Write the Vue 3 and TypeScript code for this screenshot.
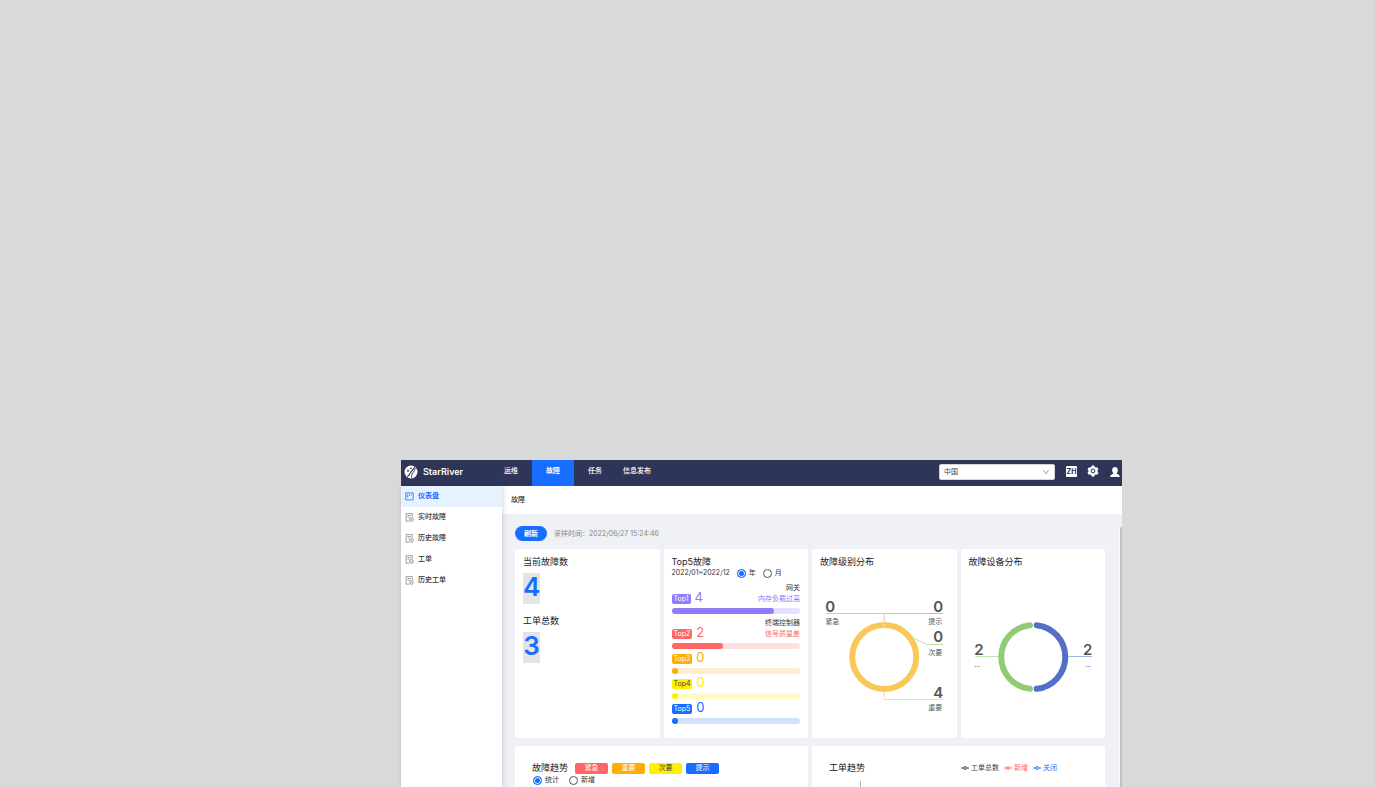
<script setup lang="ts">
import { ref } from 'vue'

interface TopItem {
  rank: number
  count: number
  percent: number
  tone: string
  device?: string
  fault?: string
}

const navItems = ['运维', '故障', '任务', '信息发布']
const sideItems = ['仪表盘', '实时故障', '历史故障', '工单', '历史工单']

const topItems: TopItem[] = [
  { rank: 1, count: 4, percent: 80, tone: 'purple', device: '网关', fault: '内存负载过高' },
  { rank: 2, count: 2, percent: 40, tone: 'red', device: '终端控制器', fault: '信号质量差' },
  { rank: 3, count: 0, percent: 0, tone: 'orange' },
  { rank: 4, count: 0, percent: 0, tone: 'yellow' },
  { rank: 5, count: 0, percent: 0, tone: 'blue' },
]

const levels = [
  { name: '紧急', tone: 'red' },
  { name: '重要', tone: 'orange' },
  { name: '次要', tone: 'yellow' },
  { name: '提示', tone: 'blue' },
]

const legend = [
  { name: '工单总数', tone: 'dark' },
  { name: '新增', tone: 'red' },
  { name: '关闭', tone: 'blue' },
]

const period = ref('year')
const trend = ref('total')
const region = ref('中国')
</script>

<template>
  <div class="page">
    <div class="app">
      <header class="topbar">
        <div class="brand">
          <svg class="logo" viewBox="0 0 14 14" aria-hidden="true">
            <circle cx="7" cy="7" r="6.5" fill="#fff" />
            <path d="M3.2 11.6 C5.6 10.8 5.4 8.4 7 6.8 C8.6 5.2 9.8 4 10.6 2.2" fill="none" stroke="#2f3459" stroke-width="1.1" />
            <path d="M7.6 12.8 C7.4 10.8 7.6 9.4 8.8 8 C10 6.6 10.8 5 11.4 3.4" fill="none" stroke="#2f3459" stroke-width="0.9" />
            <path d="M4 4.6 V7 M2.8 5.8 H5.2 M7 2.6 V4.2 M6.2 3.4 H7.8" stroke="#2f3459" stroke-width="0.8" />
          </svg>
          <span>StarRiver</span>
        </div>
        <nav class="nav">
          <a v-for="(n, i) in navItems" :key="n" href="#" :class="{ active: i === 1 }">{{ n }}</a>
        </nav>
        <div class="tools">
          <div class="select">
            <select v-model="region" aria-label="区域">
              <option>中国</option>
            </select>
            <svg viewBox="0 0 6 6" aria-hidden="true">
              <path d="M0.5 1.2 L3 4.8 L5.5 1.2" fill="none" stroke="#777" stroke-width="0.7" />
            </svg>
          </div>
          <button class="lang" type="button">ZH</button>
          <button class="icon gear" type="button" aria-label="设置">
            <svg viewBox="0 0 12 12">
              <path d="M4.7 0.6 H7.3 L7.7 2 L8.8 2.6 L10.2 2.2 L11.5 4.5 L10.5 5.5 V6.5 L11.5 7.5 L10.2 9.8 L8.8 9.4 L7.7 10 L7.3 11.4 H4.7 L4.3 10 L3.2 9.4 L1.8 9.8 L0.5 7.5 L1.5 6.5 V5.5 L0.5 4.5 L1.8 2.2 L3.2 2.6 L4.3 2 Z" fill="#fff" />
              <circle cx="6" cy="6" r="1.9" fill="#fff" stroke="#2f3459" stroke-width="1" />
            </svg>
          </button>
          <button class="icon user" type="button" aria-label="用户">
            <svg viewBox="0 0 12 12">
              <path d="M6 0.9 C8 0.9 8.9 2.3 8.9 4 C8.9 5.6 8.2 6.5 7.5 7.2 C7.4 8.1 10.6 8 10.9 10.9 H1.1 C1.4 8 4.6 8.1 4.5 7.2 C3.8 6.5 3.1 5.6 3.1 4 C3.1 2.3 4 0.9 6 0.9 Z" fill="#fff" />
            </svg>
          </button>
        </div>
      </header>

      <div class="body">
        <aside class="side">
          <a v-for="(s, i) in sideItems" :key="s" href="#" :class="{ active: i === 0 }">
            <svg v-if="i === 0" viewBox="0 0 9 9" aria-hidden="true">
              <path d="M0.8 0.9 H8.2 V7.9 H0.8 Z M2.7 2.4 V5.6 M4.6 2.4 V4 M6.4 2.4 V3.4" fill="none" stroke="currentColor" stroke-width="0.8" />
            </svg>
            <svg v-else viewBox="0 0 9 9" aria-hidden="true">
              <path d="M4 8.2 H1.1 V0.6 H7.3 V4 M2.5 2.5 H5.9 M2.5 4.2 H4.6" fill="none" stroke="currentColor" stroke-width="0.7" />
              <circle cx="6.4" cy="6.4" r="1.9" fill="none" stroke="currentColor" stroke-width="0.7" />
              <path d="M5.6 6.3 L6.3 7 L7.3 5.8" fill="none" stroke="currentColor" stroke-width="0.6" />
            </svg>
            <span>{{ s }}</span>
          </a>
        </aside>

        <main class="main">
          <div class="crumb">故障</div>
          <div class="content">
            <div class="actions">
              <button class="refresh" type="button">刷新</button>
              <span>采样时间：2022/06/27 15:24:46</span>
            </div>

            <div class="grid">
              <section class="card">
                <h2>当前故障数</h2>
                <div class="big">4</div>
                <h2 class="second">工单总数</h2>
                <div class="big">3</div>
              </section>

              <section class="card">
                <h2>Top5故障</h2>
                <div class="period">
                  <span>2022/01~2022/12</span>
                  <label><input v-model="period" type="radio" name="period" value="year" />年</label>
                  <label><input v-model="period" type="radio" name="period" value="month" />月</label>
                </div>
                <ul class="tops">
                  <li v-for="t in topItems" :key="t.rank" :class="t.tone">
                    <div class="info">
                      <span class="tag">Top{{ t.rank }}</span>
                      <span class="count">{{ t.count }}</span>
                      <span v-if="t.device" class="desc">
                        <span class="device">{{ t.device }}</span>
                        <span>{{ t.fault }}</span>
                      </span>
                    </div>
                    <div class="track"><div class="fill" :style="{ width: t.percent + '%' }"></div></div>
                  </li>
                </ul>
              </section>

              <section class="card">
                <h2>故障级别分布</h2>
                <svg class="chart" viewBox="0 0 144 160">
                  <circle cx="72" cy="88" r="32" fill="none" stroke="#fac858" stroke-width="6" />
                  <g fill="none" stroke-width="1">
                    <path d="M72 44.5 H131" stroke="#b4bfe8" />
                    <path d="M14 44.5 H72 V53" stroke="#f6b9b9" />
                    <path d="M72 53 V59" stroke="#fbd9a0" />
                    <path d="M102 69.5 L114 75.5 H131" stroke="#bfe2b0" />
                    <path d="M72 123 V130.5 H131" stroke="#fbdd97" />
                  </g>
                  <g class="num">
                    <text x="13" y="43">0</text>
                    <text class="end" x="131" y="43">0</text>
                    <text class="end" x="131" y="73">0</text>
                    <text class="end" x="131" y="129">4</text>
                  </g>
                  <g class="name">
                    <text x="13" y="55">紧急</text>
                    <text class="end" x="130" y="55">提示</text>
                    <text class="end" x="130" y="86">次要</text>
                    <text class="end" x="130" y="141">重要</text>
                  </g>
                </svg>
              </section>

              <section class="card">
                <h2>故障设备分布</h2>
                <svg class="chart" viewBox="0 0 144 160">
                  <g fill="none" stroke-width="6" stroke-linecap="round">
                    <path d="M75.4 56.18 A32 32 0 0 1 75.4 119.82" stroke="#5470c6" />
                    <path d="M68.6 56.18 A32 32 0 0 0 68.6 119.82" stroke="#91cc75" />
                  </g>
                  <path d="M14 87.5 H37" stroke="#bfe2b0" />
                  <path d="M107 87.5 H131" stroke="#a5b3e0" />
                  <g class="num">
                    <text x="13" y="86">2</text>
                    <text class="end" x="131" y="86">2</text>
                  </g>
                  <g class="name">
                    <text x="13" y="98">...</text>
                    <text class="end" x="130" y="98">...</text>
                  </g>
                </svg>
              </section>

              <section class="card wide">
                <div class="trend-head">
                  <h2>故障趋势</h2>
                  <button v-for="l in levels" :key="l.name" type="button" class="level" :class="l.tone">{{ l.name }}</button>
                </div>
                <div class="trend-mode">
                  <label><input v-model="trend" type="radio" name="trend" value="total" />统计</label>
                  <label><input v-model="trend" type="radio" name="trend" value="new" />新增</label>
                </div>
              </section>

              <section class="card wide">
                <div class="order-head">
                  <h2>工单趋势</h2>
                  <ul class="legend">
                    <li v-for="l in legend" :key="l.name" :class="l.tone">
                      <svg viewBox="0 0 8 6" aria-hidden="true">
                        <path d="M0 3 H2.4 M5.6 3 H8" stroke="currentColor" />
                        <circle cx="4" cy="3" r="1.4" fill="#fff" stroke="currentColor" />
                      </svg>{{ l.name }}
                    </li>
                  </ul>
                </div>
                <div class="axis"></div>
              </section>
            </div>
            <div class="scroll"></div>
          </div>
        </main>
      </div>
    </div>
  </div>
</template>

<style>
body {
  margin: 0;
  background: #d9d9d9;
}
</style>

<style scoped>
* {
  box-sizing: border-box;
}
.page {
  display: flex;
  height: 100vh;
  padding: 460px 253px 0 401px;
  overflow: hidden;
  background: #d9d9d9;
  color: #333;
  font: 7px/10px Inter, "Noto Sans CJK SC", sans-serif;
}
button,
select {
  font: inherit;
  border: 0;
  padding: 0;
  margin: 0;
}
a {
  color: inherit;
  text-decoration: none;
}
h2 {
  margin: 0;
  font-size: 9px;
  line-height: 14px;
  font-weight: 400;
  color: #222;
}
ul {
  margin: 0;
  padding: 0;
  list-style: none;
}
.app {
  flex: 1;
  min-width: 0;
  display: flex;
  flex-direction: column;
}
.topbar {
  display: flex;
  align-items: center;
  height: 26px;
  flex: none;
  background: #2f3459;
  color: #fff;
}
.brand {
  display: flex;
  align-items: center;
  gap: 5px;
  width: 89px;
  padding: 0 0 3px 3px;
  font-size: 9px;
  font-weight: 600;
}
.logo {
  width: 14px;
  height: 14px;
}
.brand span {
  line-height: 12px;
}
.nav {
  display: flex;
  height: 26px;
}
.nav a {
  padding: 0 14px;
  line-height: 22px;
  font-weight: 500;
}
.nav a:last-child {
  padding-left: 7px;
}
.nav a.active {
  background: #166dff;
  font-weight: 700;
}
.tools {
  display: flex;
  align-items: center;
  margin-left: auto;
  padding-bottom: 3px;
  height: 26px;
}
.select {
  display: flex;
  align-items: center;
  width: 116px;
  height: 16px;
  margin-right: 11px;
  padding-right: 5px;
  border: 1px solid #d4d4dc;
  border-radius: 2px;
  background: #fff;
}
.select select {
  flex: 1;
  appearance: none;
  padding-left: 4px;
  background: none;
  color: #444;
}
.select svg {
  width: 6px;
  height: 6px;
}
.lang {
  width: 11px;
  height: 11px;
  margin-right: 10px;
  border-radius: 1px;
  background: #fff;
  color: #2f3459;
  font-weight: 700;
  line-height: 11px;
}
.icon {
  width: 12px;
  height: 12px;
  background: none;
}
.icon svg {
  display: block;
}
.icon.gear {
  margin-bottom: 2px;
}
.icon.user {
  margin-left: 10px;
  margin-right: 1px;
}
.body {
  display: flex;
  flex: 1;
  min-height: 0;
}
.side {
  position: relative;
  width: 101px;
  flex: none;
  background: #fff;
  box-shadow: 1px 0 5px rgba(30, 40, 80, 0.2);
}
.side a {
  display: flex;
  align-items: center;
  gap: 4px;
  height: 21px;
  padding: 0 0 1px 4px;
  color: #333;
  font-weight: 500;
}
.side svg {
  width: 9px;
  height: 9px;
  color: #777;
}
.side a.active {
  background: #e6f3ff;
  color: #166dff;
  font-weight: 700;
}
.side .active svg {
  color: #166dff;
}
.main {
  flex: 1;
  min-width: 0;
  display: flex;
  flex-direction: column;
  background: #eff1f6;
}
.crumb {
  height: 28px;
  flex: none;
  padding-left: 9px;
  background: #fff;
  line-height: 28px;
  font-weight: 500;
}
.content {
  position: relative;
  flex: 1;
  min-height: 0;
  padding: 12px 17px 0 13px;
  overflow: hidden;
}
.scroll {
  position: absolute;
  top: 13px;
  right: 0;
  bottom: 0;
  width: 3px;
  border-left: 1px solid #fafafa;
  border-radius: 2px 0 0 0;
  background: #c1c1c1;
}
.actions {
  display: flex;
  align-items: center;
  gap: 7px;
  margin-bottom: 8px;
  color: #888;
}
.refresh {
  width: 32px;
  height: 15px;
  border-radius: 8px;
  background: #166dff;
  color: #fff;
  font-weight: 700;
}
.grid {
  display: grid;
  grid-template-columns: repeat(4, minmax(0, 1fr));
  column-gap: 4px;
  row-gap: 8px;
}
.card {
  height: 189px;
  padding: 6px 8px 0;
  border-radius: 2px;
  background: #fff;
}
.card.wide {
  grid-column: span 2;
  padding: 15px 17px 0;
}
.big {
  width: 17px;
  height: 31px;
  margin-top: 4px;
  background: #e4e4e4;
  color: #166dff;
  font-size: 26px;
  line-height: 28px;
  font-weight: 600;
  text-align: center;
}
.second {
  margin-top: 10px;
}
label {
  display: flex;
  align-items: center;
  gap: 3px;
}
input {
  appearance: none;
  width: 9px;
  height: 9px;
  margin: 0;
  border: 1px solid #555;
  border-radius: 50%;
}
input:checked {
  border-color: #166dff;
  background: #166dff;
  box-shadow: inset 0 0 0 1px #fff;
}
.period {
  display: flex;
  gap: 7px;
  height: 10px;
  margin-top: -1px;
}
.tops {
  margin-top: 4px;
}
.tops li {
  margin-bottom: 3px;
}
.info {
  display: flex;
  gap: 4px;
  align-items: flex-end;
  height: 16px;
}
.info:has(.desc) {
  height: 26px;
}
.tag {
  height: 10px;
  margin-bottom: 4px;
  padding: 0 2px;
  border-radius: 2px;
  color: #fff;
}
.count {
  margin-bottom: 4px;
  font-size: 13px;
  line-height: 14px;
}
.desc {
  display: flex;
  flex-direction: column;
  margin-left: auto;
  align-self: flex-start;
  line-height: 11px;
  text-align: right;
}
.device {
  color: #333;
}
.track {
  height: 6px;
  border-radius: 3px;
}
.fill {
  min-width: 6px;
  height: 6px;
  border-radius: 3px;
}
.tops .purple { color: #8f7cfb; }
.purple .tag, .purple .fill { background: #8f7cfb; }
.purple .track { background: #e6e1fe; }
.tops .red { color: #ff6665; }
.red .tag, .red .fill { background: #ff6665; }
.red .track { background: #ffe0e0; }
.tops .orange { color: #ffac04; }
.orange .tag, .orange .fill { background: #ffac04; }
.orange .track { background: #ffeecd; }
.tops .yellow { color: #fff000; }
.yellow .tag, .yellow .fill { background: #fff000; }
.yellow .tag { color: #444; }
.yellow .track { background: #fffcc9; }
.tops .blue { color: #166dff; }
.blue .tag, .blue .fill { background: #166dff; }
.blue .track { background: #d0e2ff; }
.chart {
  display: block;
  width: calc(100% + 16px);
  height: 160px;
  margin: 0 -8px;
}
.num {
  font-size: 15px;
  font-weight: 600;
  fill: #555;
}
.name {
  fill: #555;
}
.end {
  text-anchor: end;
}
.trend-head {
  display: flex;
  align-items: center;
  gap: 4px;
}
.trend-head h2 {
  margin-right: 3px;
}
.level {
  width: 33px;
  height: 11px;
  border-radius: 2px;
  color: #fff;
}
.level.red { background: #ff6665; }
.level.orange { background: #ffac04; }
.level.yellow { background: #fff000; color: #444; }
.level.blue { background: #166dff; }
.trend-mode {
  display: flex;
  gap: 10px;
  padding-left: 1px;
}
.order-head {
  display: flex;
  justify-content: space-between;
  align-items: center;
  padding-right: 31px;
}
.legend {
  display: flex;
  gap: 5px;
}
.legend li {
  display: flex;
  align-items: center;
  gap: 2px;
}
.legend svg {
  width: 8px;
  height: 6px;
}
.legend .dark { color: #3c4055; }
.legend .red { color: #ff6665; background: none; }
.legend .blue { color: #166dff; background: none; }
.axis {
  width: 1px;
  height: 120px;
  margin: 6px 0 0 31px;
  background: #bbb;
}
</style>
